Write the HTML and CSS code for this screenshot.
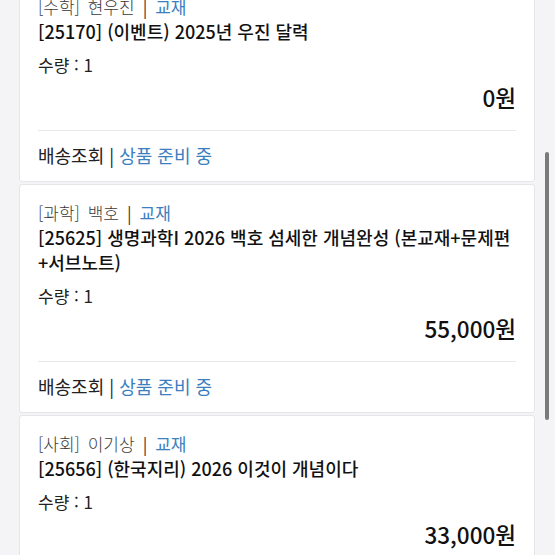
FILE: index.html
```html
<!DOCTYPE html>
<html lang="ko">
<head>
<meta charset="utf-8">
<link rel="stylesheet" href="styles.css">
</head>
<body>
<div class="list">
  <div class="card">
    <div class="cat">[수학] <span class="name">현우진</span><span class="sep">|</span><span class="blue">교재</span></div>
    <div class="title">[25170] (이벤트) 2025년 우진 달력</div>
    <div class="qty">수량 : 1</div>
    <div class="price">0원</div>
    <div class="foot">배송조회 <span class="sep2">|</span> <span class="blue">상품 준비 중</span></div>
  </div>
  <div class="card">
    <div class="cat">[과학] <span class="name">백호</span><span class="sep">|</span><span class="blue">교재</span></div>
    <div class="title">[25625] 생명과학I 2026 백호 섬세한 개념완성 (본교재+문제편<br>+서브노트)</div>
    <div class="qty">수량 : 1</div>
    <div class="price">55,000원</div>
    <div class="foot">배송조회 <span class="sep2">|</span> <span class="blue">상품 준비 중</span></div>
  </div>
  <div class="card">
    <div class="cat">[사회] <span class="name">이기상</span><span class="sep">|</span><span class="blue">교재</span></div>
    <div class="title">[25656] (한국지리) 2026 이것이 개념이다</div>
    <div class="qty">수량 : 1</div>
    <div class="price">33,000원</div>
    <div class="foot">배송조회 <span class="sep2">|</span> <span class="blue">상품 준비 중</span></div>
  </div>
</div>
<div class="thumb"></div>
</body>
</html>
```
FILE: styles.css
```css
html, body {
  margin: 0;
  padding: 0;
  background: #f4f4f6;
  overflow: hidden;
  height: 555px;
}
body {
  font-family: "Noto Sans CJK KR", "Noto Sans", sans-serif;
  color: #1a1a1a;
}
.list {
  margin-top: -22px;
  padding: 0 20px 0 19px;
  display: flex;
  flex-direction: column;
  gap: 2px;
}
.card {
  background: #fff;
  border: 1px solid #e6e6e8;
  border-radius: 3px;
  padding: 15px 18px 13px 18px;
}
.cat {
  font-size: 17px;
  line-height: 25px;
  font-weight: 300;
  color: #3a3a3a;
}
.name {
  margin-left: 3px;
}
.sep {
  color: #333;
  font-weight: 400;
  margin: 0 8px;
}
.sep2 {
  color: #222;
}
.blue {
  color: #3b7fc0;
  font-weight: 400;
}
.title {
  font-size: 18px;
  line-height: 25px;
  font-weight: 500;
  color: #111;
}
.qty {
  margin-top: 8px;
  font-size: 17px;
  line-height: 25px;
  color: #222;
}
.price {
  margin-top: 5px;
  font-size: 22.5px;
  line-height: 30px;
  font-weight: 500;
  text-align: right;
  color: #111;
}
.foot {
  margin-top: 18px;
  border-top: 1px solid #e8e8ea;
  padding-top: 12px;
  font-size: 18px;
  line-height: 25px;
  color: #222;
}
.thumb {
  position: fixed;
  left: 545px;
  top: 152px;
  width: 4px;
  height: 268px;
  border-radius: 2px;
  background: #7a7a7a;
}
```
